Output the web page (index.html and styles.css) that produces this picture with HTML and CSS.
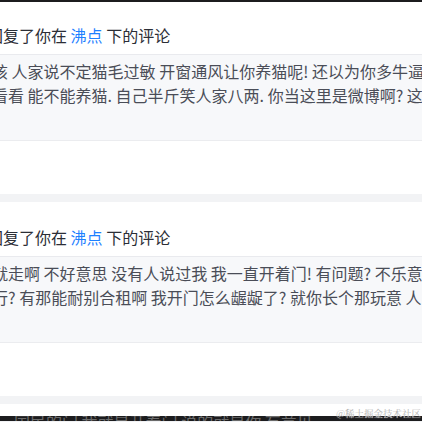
FILE: index.html
```html
<!DOCTYPE html>
<html lang="zh-CN">
<head>
  <meta charset="UTF-8">
  <meta name="viewport" content="width=device-width, initial-scale=1">
  <title>消息通知</title>
  <link rel="stylesheet" href="styles.css">
</head>
<body>
  <div class="top-edge"></div>
  <!-- Notification list -->
  <div class="feed">
    <div class="card first">
      <div class="card-head">回复了你在 <a class="link" href="#">沸点</a> 下的评论</div>
      <div class="card-body">
        <div class="line">该 人家说不定猫毛过敏 开窗通风让你养猫呢! 还以为你多牛逼呢</div>
        <div class="line">看看 能不能养猫. 自己半斤笑人家八两. 你当这里是微博啊? 这里</div>
      </div>
      <div class="card-foot"></div>
    </div>
    <div class="card">
      <div class="card-head">回复了你在 <a class="link" href="#">沸点</a> 下的评论</div>
      <div class="card-body">
        <div class="line">就走啊 不好意思 没有人说过我 我一直开着门! 有问题? 不乐意</div>
        <div class="line">行? 有那能耐别合租啊 我开门怎么龌龊了? 就你长个那玩意 人家</div>
      </div>
      <div class="card-foot"></div>
    </div>
    <div class="card last"></div>
  </div>
  <div class="bottom-edge">国民的门 我就是开着门 说的就是你 有意见</div>
  <div class="watermark">@稀土掘金技术社区</div>
</body>
</html>
```

FILE: styles.css
```css
/* Page base */
body {
  margin: 0;
  width: 422px;
  height: 422px;
  overflow: hidden;
  position: relative;
  background: #f2f3f5;
  font-family: "Noto Sans CJK SC", sans-serif;
}
.top-edge {
  height: 2px;
  background: #1c1c1e;
}
/* List of notification cards */
.feed {
  display: flex;
  flex-direction: column;
  gap: 8px;
}
.card {
  background: #ffffff;
  white-space: nowrap;
}
.card-head {
  margin-left: -13px;
  padding: 22px 0 6px;
  line-height: 26px;
  font-size: 16px;
  color: #2b2e36;
  border-bottom: 1px solid #e9eaee;
}
.card.first .card-head {
  padding-top: 20px;
}
.link {
  color: #1e80ff;
  text-decoration: none;
}
.card-body {
  background: #f7f8fa;
  padding: 4px 0 33px;
  border-bottom: 1px solid #ebecef;
}
.line {
  margin-left: -8px;
  font-size: 16px;
  line-height: 24px;
  color: #4a4d57;
}
.card-foot {
  height: 53px;
}
.card.last {
  height: 12px;
}
.bottom-edge {
  height: 5px;
  overflow: hidden;
  background: #1c1c1e;
  color: #6b6b6b;
  font-size: 16px;
  line-height: 10px;
  padding-left: 14px;
  white-space: nowrap;
}
/* Watermark over the corner */
.watermark {
  position: absolute;
  right: 1px;
  bottom: 3px;
  font-family: "Noto Serif CJK SC", "Noto Sans CJK SC", serif;
  font-size: 9.5px;
  line-height: 12px;
  color: #b5b5b5;
  text-shadow: 0 0 1px #ffffff;
}
```
